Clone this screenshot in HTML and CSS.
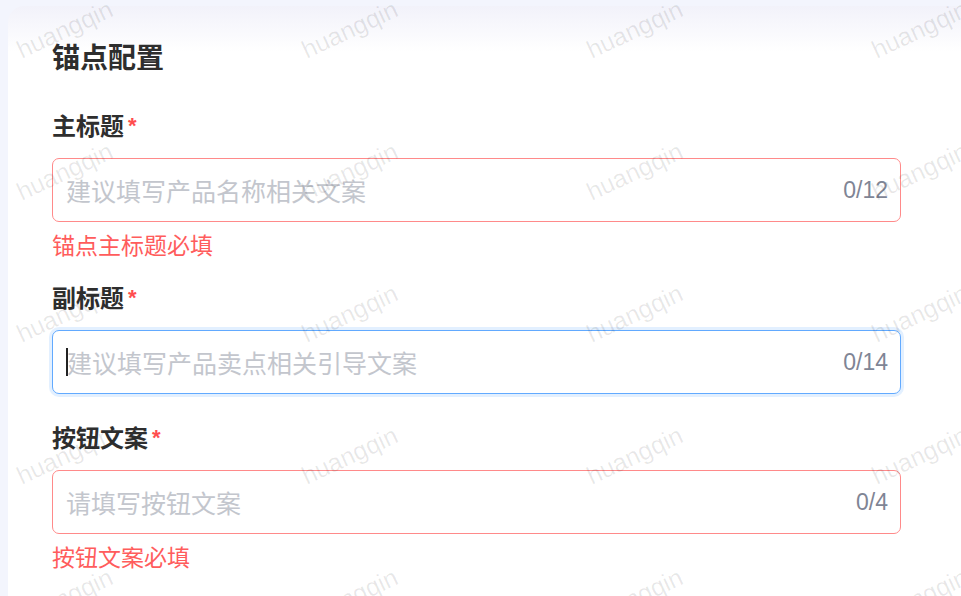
FILE: index.html
```html
<!DOCTYPE html>
<html lang="zh-CN">
<head>
<meta charset="utf-8">
<title>锚点配置</title>
<link rel="stylesheet" href="styles.css">
</head>
<body>
<div class="page">
  <div class="card">
    <h2 class="title">锚点配置</h2>

    <div class="item has-error">
      <div class="label">主标题<span class="req">*</span></div>
      <div class="field field-error">
        <span class="ph">建议填写产品名称相关文案</span>
        <span class="count">0/12</span>
      </div>
      <div class="error">锚点主标题必填</div>
    </div>

    <div class="item">
      <div class="label">副标题<span class="req">*</span></div>
      <div class="field field-focus">
        <span class="caret"></span><span class="ph">建议填写产品卖点相关引导文案</span>
        <span class="count">0/14</span>
      </div>
    </div>

    <div class="item has-error last">
      <div class="label">按钮文案<span class="req">*</span></div>
      <div class="field field-error">
        <span class="ph">请填写按钮文案</span>
        <span class="count">0/4</span>
      </div>
      <div class="error">按钮文案必填</div>
    </div>
  </div>

  <div class="watermarks" aria-hidden="true">
    <span>huangqin</span><span>huangqin</span><span>huangqin</span><span>huangqin</span>
    <span>huangqin</span><span>huangqin</span><span>huangqin</span><span>huangqin</span>
    <span>huangqin</span><span>huangqin</span><span>huangqin</span><span>huangqin</span>
    <span>huangqin</span><span>huangqin</span><span>huangqin</span><span>huangqin</span>
    <span>huangqin</span><span>huangqin</span><span>huangqin</span><span>huangqin</span>
  </div>
</div>
</body>
</html>
```

FILE: styles.css
```css
* { box-sizing: border-box; }

html, body {
  margin: 0;
  padding: 0;
  width: 961px;
  height: 596px;
  overflow: hidden;
  background: #f3f5fd;
  font-family: "Noto Sans CJK SC", "Noto Sans", sans-serif;
}

.page {
  position: relative;
  width: 961px;
  height: 596px;
  padding: 6px 0 0 8px;
  overflow: hidden;
}

.card {
  height: 620px;
  background: linear-gradient(180deg, #f2f2fa 0px, #ffffff 46px);
  border-top-left-radius: 16px;
  padding: 32px 52px 0 44px;
  display: flex;
  flex-direction: column;
}

.title {
  margin: 0 0 35px 0;
  font-size: 28px;
  line-height: 36px;
  font-weight: 600;
  color: #2e2e2e;
}

.item {
  display: flex;
  flex-direction: column;
  margin-bottom: 27px;
}

.item.has-error {
  margin-bottom: 25px;
}

.label {
  font-size: 24px;
  line-height: 32px;
  font-weight: 600;
  color: #2e2e2e;
  margin-bottom: 17px;
  display: flex;
  align-items: center;
}

.req {
  color: #ff4d4f;
  font-family: "Liberation Sans", sans-serif;
  font-size: 22px;
  font-weight: 700;
  margin-left: 4px;
  position: relative;
  top: 1px;
}

.field {
  height: 64px;
  width: 849px;
  border: 1px solid #ff8a8a;
  border-radius: 7px;
  background: #ffffff;
  display: flex;
  align-items: center;
  padding: 0 12px 0 13px;
}

.field-focus {
  border-color: #62aaff;
  box-shadow: 0 0 0 3px rgba(98, 170, 255, 0.18);
}

.ph {
  flex: 1;
  font-size: 25px;
  line-height: 32px;
  color: #c3c6cd;
  white-space: nowrap;
}

.caret {
  width: 2px;
  height: 28px;
  background: #222;
  margin-right: -1px;
  flex: none;
}

.count {
  font-family: "Liberation Sans", Arial, sans-serif;
  font-size: 23px;
  color: #7f8595;
  flex: none;
}

.error {
  margin-top: 10px;
  font-size: 23px;
  line-height: 24px;
  color: #ff5c5c;
}

.watermarks {
  position: absolute;
  left: -78px;
  top: -42px;
  display: grid;
  grid-template-columns: repeat(4, 285px);
  grid-auto-rows: 142px;
  pointer-events: none;
}

.watermarks span {
  display: flex;
  align-items: center;
  justify-content: center;
  font-family: "Liberation Sans", Arial, sans-serif;
  font-size: 25px;
  color: rgba(0, 0, 0, 0.09);
  transform: rotate(-25deg);
}
```
